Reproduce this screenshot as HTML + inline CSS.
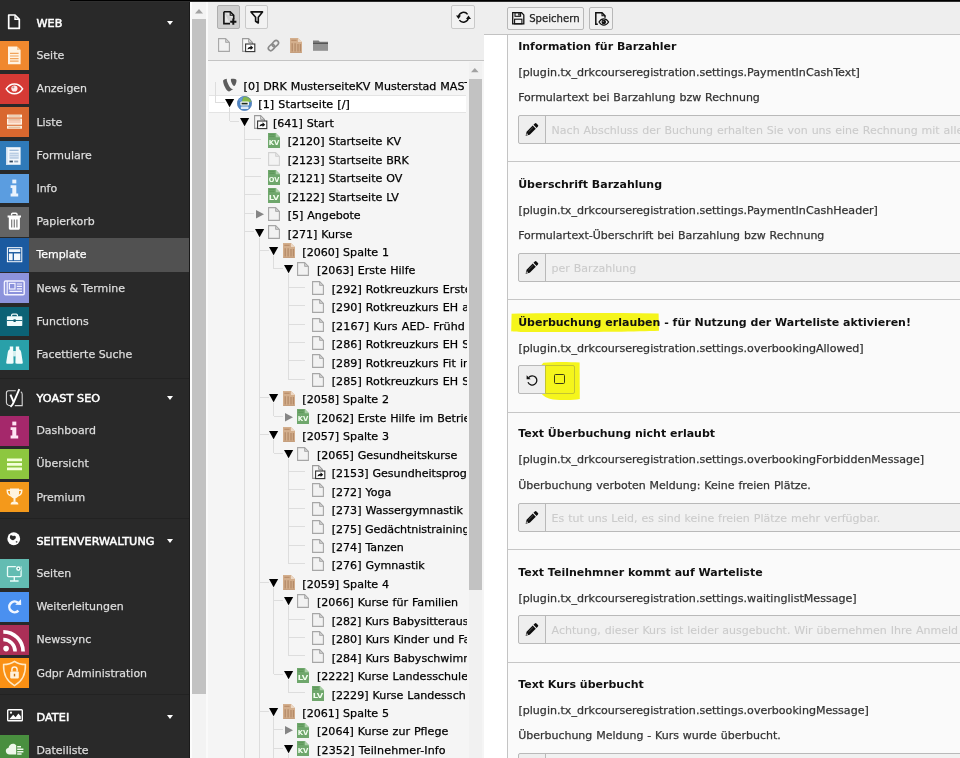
<!DOCTYPE html>
<html lang="de"><head><meta charset="utf-8"><title>TYPO3 Template</title>
<style>
*{box-sizing:border-box;margin:0;padding:0}
html,body{width:960px;height:758px;overflow:hidden;background:#fff}
body{-webkit-text-stroke:.250px;position:relative;font-family:"DejaVu Sans","Liberation Sans",sans-serif;font-size:11.1px;color:#333}
.abs{position:absolute}
svg{display:block;overflow:visible}
#sb,#tree,#content{will-change:transform}
#sb{position:absolute;left:0;top:0;width:190px;height:758px;background:#292929;overflow:hidden}
#topbar{position:absolute;left:70px;top:0;width:890px;height:2px;background:linear-gradient(#000 0,#000 1px,#2e2e2e 1px,#2e2e2e 2px)}
.mi{position:absolute;left:0;width:189.500px;height:33.250px}
.mi .ic{position:absolute;left:0;top:1.800px;width:29px;height:29.600px;overflow:hidden}
.mi .tx{position:absolute;left:36.400px;top:0;height:33.200px;line-height:33.200px;color:#dddddd;font-size:10.970px;white-space:nowrap}
.mi.act{background:#515151}
.mi.act .ic{top:0;height:33.250px}
.mi.act .tx{color:#fff}
.mh{position:absolute;left:0;width:190px;height:33px}
.mh .tx{position:absolute;left:36.400px;top:0;line-height:35.200px;color:#fff;font-weight:400;font-size:11.200px;-webkit-text-stroke:.500px;letter-spacing:.100px;white-space:nowrap}
.mh .car{position:absolute;left:166.600px;top:14.900px;width:0;height:0;border-left:3.500px solid transparent;border-right:3.500px solid transparent;border-top:4.200px solid #fff}
.sep{position:absolute;left:0;width:190px;height:1px;background:#222}
#tree{position:absolute;left:190px;top:2px;width:294px;height:756px;background:#f5f5f5;overflow:hidden}
#content{position:absolute;left:484px;top:2px;width:476px;height:756px;background:#fff;overflow:hidden}
.tr{position:absolute;height:18.440px;white-space:nowrap;font-size:11.090px;word-spacing:.420px;line-height:18.440px;color:#000}
.vl{position:absolute;width:1px;background:#dddddd}
.hl{position:absolute;height:1px;background:#dddddd}
.sec{position:absolute;left:0;width:453px;border-top:1px solid #c6c6c6}
.sec .h{-webkit-text-stroke:0;position:absolute;left:11.200px;top:14px;font-weight:700;font-size:11px;line-height:18px;color:#111;white-space:nowrap}
.sec .p{position:absolute;left:11.400px;top:40px;font-size:11.080px;line-height:18px;color:#333;white-space:nowrap}
.sec .d{position:absolute;left:11.200px;top:65.500px;word-spacing:.400px;font-size:10.990px;line-height:18px;color:#333;white-space:nowrap}
.ig{position:absolute;left:11px;height:29px;width:460px;margin-top:-.500px}
.ig .b{position:absolute;left:0;top:0;width:28px;height:29px;border:1px solid #b9b9b9;background:#eeeeee;border-radius:2px 0 0 2px}
.ig .i{position:absolute;left:27px;top:0;width:440px;height:29px;border:1px solid #b9b9b9;background:#f1f1f1;color:#cbcbcb;-webkit-text-stroke:.100px;word-spacing:.400px;font-size:11.020px;line-height:29.500px;padding-left:5.600px;white-space:nowrap;overflow:hidden}
.btn{position:absolute;border:1px solid #b8b8b8;background:#f1f1f1;border-radius:2px}
</style></head>
<body>
<div id="sb">
<div class="mh" style="top:6.0px"><span class="tx">WEB</span><span class="car"></span></div><svg class="abs" style="left:7.2px;top:14.3px" width="14" height="15.5" viewBox="0 0 14 15.500" ><path d="M1.700 1H8L12.300 5.300V14.400H1.700Z" fill="none" stroke="#fff" stroke-width="1.700" stroke-linejoin="round"/><path d="M8 1.400V5.300H12" fill="none" stroke="#fff" stroke-width="1.400"/></svg>
<div class="mi" style="top:39.08px"><div class="ic" style="background:#f0882e"><svg width="29" height="29.5" viewBox="0 0 29 29.5" style="position:absolute;left:0;top:0"><path d="M8 5.500H17L20.600 9.100V23.200H8Z" fill="#fff3e2"/><path d="M17 5.500V9.100H20.600Z" fill="#f7c892"/><path d="M10 12.400H18.600M10 15H18.600M10 17.600H18.600M10 20.200H18.600" stroke="#f1a45c" stroke-width="1.200"/></svg></div><span class="tx">Seite</span></div>
<div class="mi" style="top:72.31px"><div class="ic" style="background:#d53a35"><svg width="29" height="29.5" viewBox="0 0 29 29.5" style="position:absolute;left:0;top:0"><path d="M6.200 14.800C8.500 11.200 11.400 9.900 14.400 9.900S20.300 11.200 22.600 14.800C20.300 18.400 17.400 19.700 14.400 19.700S8.500 18.400 6.200 14.800Z" fill="none" stroke="#fff" stroke-width="1.500"/><circle cx="14.400" cy="14.500" r="3.100" fill="#fdeaea"/><circle cx="13.300" cy="13.300" r="1.100" fill="#c98a88"/></svg></div><span class="tx">Anzeigen</span></div>
<div class="mi" style="top:105.54px"><div class="ic" style="background:#d9682f"><svg width="29" height="29.5" viewBox="0 0 29 29.5" style="position:absolute;left:0;top:0"><rect x="7" y="7.600" width="15" height="2.900" fill="#fff6e6"/><rect x="7" y="11.600" width="15" height="6.100" fill="#fff3e4"/><rect x="7" y="18.800" width="15" height="2.900" fill="#fff6e6"/><path d="M8.400 9H20.400M8.400 20.200H20.400" stroke="#c98a5e" stroke-width=".700"/><rect x="8.200" y="13" width="12.600" height="3.300" fill="#f7cdb8"/><path d="M8.400 12.700H20.400" stroke="#c98a5e" stroke-width=".600"/></svg></div><span class="tx">Liste</span></div>
<div class="mi" style="top:138.77px"><div class="ic" style="background:#2f7ab9"><svg width="29" height="29.5" viewBox="0 0 29 29.5" style="position:absolute;left:0;top:0"><rect x="6" y="6.200" width="14.600" height="17.600" fill="#f2f7fc"/><rect x="6" y="6.200" width="1.600" height="17.600" fill="#cfe0f0"/><path d="M9.500 9.300H18.600" stroke="#9db9d8" stroke-width="1.300"/><rect x="9.500" y="11.600" width="9.200" height="6.200" fill="#b9cde3"/><path d="M9.500 13.600H18.700M9.500 15.700H18.700" stroke="#e3ecf6" stroke-width=".800"/><rect x="9.500" y="19.600" width="3.400" height="1.800" fill="#33475c"/><rect x="14.200" y="19.600" width="4" height="1.800" fill="#8ea3ba"/></svg></div><span class="tx">Formulare</span></div>
<div class="mi" style="top:172.00px"><div class="ic" style="background:#5b9de0"><svg width="29" height="29.5" viewBox="0 0 29 29.5" style="position:absolute;left:0;top:0"><rect x="12.300" y="5.600" width="4" height="3.800" fill="#eaf3fd"/><path d="M10.600 11.200H16.300V19.400H18.200V22.400H10.600V19.400H12.300V14H10.600Z" fill="#eaf3fd"/></svg></div><span class="tx">Info</span></div>
<div class="mi" style="top:205.23px"><div class="ic" style="background:#646464"><svg width="29" height="29.5" viewBox="0 0 29 29.5" style="position:absolute;left:0;top:0"><path d="M7.600 8.600H21V10.400H19.900V21.300C19.900 22.200 19.300 22.800 18.500 22.800H10.200C9.400 22.800 8.800 22.200 8.800 21.300V10.400H7.600Z" fill="#fff"/><path d="M11.600 8.600V7.200C11.600 6.500 12.100 6.200 12.700 6.200H15.900C16.500 6.200 17 6.500 17 7.200V8.600" fill="none" stroke="#fff" stroke-width="1.400"/><path d="M11.700 12.400V20.400M14.300 12.400V20.400M16.900 12.400V20.400" stroke="#7b7b7b" stroke-width="1.200"/></svg></div><span class="tx">Papierkorb</span></div>
<div class="mi act" style="top:238.46px"><div class="ic" style="background:#1b5aa0"><svg width="29" height="29.5" viewBox="0 0 29 33.2" style="position:absolute;left:0;top:0"><rect x="6.500" y="10.900" width="16.200" height="15.800" fill="#1b5aa0" stroke="#fff" stroke-width="1.100"/><rect x="8.200" y="12.600" width="12.800" height="3.200" fill="#f4f8fd"/><rect x="8.200" y="17.400" width="4.200" height="7.600" fill="#f4f8fd"/><rect x="13.900" y="17.400" width="7.100" height="7.600" fill="#f4f8fd"/></svg></div><span class="tx">Template</span></div>
<div class="mi" style="top:271.69px"><div class="ic" style="background:#8c93dc"><svg width="29" height="29.5" viewBox="0 0 29 29.5" style="position:absolute;left:0;top:0"><rect x="4.400" y="8" width="19.800" height="13.800" rx="1.200" fill="none" stroke="#f3f3ff" stroke-width="1.400"/><path d="M7.200 8V21.800" stroke="#f3f3ff" stroke-width="1.200"/><rect x="9.400" y="10.400" width="5.600" height="5.600" fill="none" stroke="#f3f3ff" stroke-width="1.200"/><path d="M16.800 11H22M16.800 13.400H22M16.800 15.800H22M9.400 18.400H22" stroke="#f3f3ff" stroke-width="1.200"/></svg></div><span class="tx">News &amp; Termine</span></div>
<div class="mi" style="top:304.92px"><div class="ic" style="background:#0c6275"><svg width="29" height="29.5" viewBox="0 0 29 29.5" style="position:absolute;left:0;top:0"><path d="M11.600 9.400V8.300C11.600 7.600 12.100 7.200 12.800 7.200H16.200C16.900 7.200 17.400 7.600 17.400 8.300V9.400" fill="none" stroke="#eefafa" stroke-width="1.200"/><rect x="6.900" y="9.200" width="15.400" height="9.900" rx=".800" fill="#f1fbfb"/><path d="M6.900 13.500H22.300" stroke="#1f7184" stroke-width="1"/><rect x="13.500" y="12.300" width="2.200" height="2.700" fill="#0e5a6a"/></svg></div><span class="tx">Functions</span></div>
<div class="mi" style="top:338.15px"><div class="ic" style="background:#29a0a9"><svg width="29" height="29.5" viewBox="0 0 29 29.5" style="position:absolute;left:0;top:0"><path d="M9.800 6.500H13.200V10.300L13.600 22.500C13.600 23.300 13 23.700 12.300 23.700H7.500C6.700 23.700 6.100 23.200 6.200 22.400L7.800 12.300C8.100 10.500 8.900 9.700 9.800 9.200Z" fill="#f1fbfb"/><path d="M19.200 6.500H15.800V10.300L15.400 22.500C15.400 23.300 16 23.700 16.700 23.700H21.500C22.300 23.700 22.900 23.200 22.800 22.400L21.200 12.300C20.900 10.500 20.100 9.700 19.200 9.200Z" fill="#f1fbfb"/><rect x="13" y="11" width="3" height="5.400" fill="#d5efef"/></svg></div><span class="tx">Facettierte Suche</span></div>
<div class="sep" style="top:377.500px"></div>
<div class="mh" style="top:381.0px"><span class="tx">YOAST SEO</span><span class="car"></span></div><svg class="abs" style="left:5.2px;top:388px" width="18.5" height="19.5" viewBox="0 0 18.500 19.500" ><path d="M10.800 2.800H3.600Q1.400 2.800 1.400 5V14.600Q1.400 16.600 3.400 17.200L5.600 17.600M9.800 17.600H17.200V6.400Q17.200 4.600 15.800 3.800" fill="none" stroke="#d8d8d8" stroke-width="1.100"/><path d="M5.400 6.700L8.600 13.900" fill="none" stroke="#fff" stroke-width="1.900"/><path d="M14.300 1.100L9 13.600Q7.700 17 5.500 18.900" fill="none" stroke="#fff" stroke-width="1.900"/></svg>
<div class="mi" style="top:414.28px"><div class="ic" style="background:#a5286b"><svg width="29" height="29.5" viewBox="0 0 29 29.5" style="position:absolute;left:0;top:0"><rect x="12.300" y="5.600" width="4" height="3.800" fill="#ffe4f3"/><path d="M10.600 11.200H16.300V19.400H18.200V22.400H10.600V19.400H12.300V14H10.600Z" fill="#ffe4f3"/></svg></div><span class="tx">Dashboard</span></div>
<div class="mi" style="top:447.48px"><div class="ic" style="background:#8dc73f"><svg width="29" height="29.5" viewBox="0 0 29 29.5" style="position:absolute;left:0;top:0"><path d="M7 10.800H22M7 15.300H22M7 19.800H22" stroke="#f3ffd8" stroke-width="2.800"/></svg></div><span class="tx">Übersicht</span></div>
<div class="mi" style="top:480.68px"><div class="ic" style="background:#f4991b"><svg width="29" height="29.5" viewBox="0 0 29 29.5" style="position:absolute;left:0;top:0"><path d="M10 6.400H19V11.600C19 14.600 17.200 16.400 14.500 16.400S10 14.600 10 11.600Z" fill="#fff4e0"/><path d="M10 8.200H7.200C7.200 11.200 8.600 13.200 11.200 13.800M19 8.200H21.800C21.800 11.200 20.400 13.200 17.800 13.800" fill="none" stroke="#fff4e0" stroke-width="1.400"/><rect x="13.500" y="16" width="2" height="3.800" fill="#fff4e0"/><path d="M10.600 22.500C10.600 20.700 11.900 19.600 14.500 19.600S18.400 20.700 18.400 22.500Z" fill="#fff4e0"/></svg></div><span class="tx">Premium</span></div>
<div class="sep" style="top:518px"></div>
<div class="mh" style="top:524.0px"><span class="tx">SEITENVERWALTUNG</span><span class="car"></span></div><svg class="abs" style="left:7.4px;top:532px" width="13.5" height="13.5" viewBox="0 0 13.500 13.500" ><circle cx="6.750" cy="6.750" r="6.400" fill="#fff"/><path d="M3.200 3.600C4.200 2.800 5.400 3.200 6 4.200C6.800 3.400 8.400 3.600 8.800 4.800C9.200 6.200 8 7.400 6.200 8.200C4.400 7.800 3 6.800 2.800 5.400Z" fill="#2a2a2a"/><circle cx="9.600" cy="9.800" r=".900" fill="#555"/></svg>
<div class="mi" style="top:557.08px"><div class="ic" style="background:#63bcb2"><svg width="29" height="29.5" viewBox="0 0 29 29.5" style="position:absolute;left:0;top:0"><rect x="7.500" y="7.600" width="13.600" height="10" rx=".800" fill="none" stroke="#e9fbf8" stroke-width="1.300"/><circle cx="18.400" cy="9.600" r="3.100" fill="#66bdb3"/><circle cx="18.400" cy="9.600" r="2.300" fill="#f4fffd"/><circle cx="18.400" cy="9.600" r=".800" fill="#3c8f88"/><path d="M14.300 17.600V21.600M10 22H18.600" stroke="#e9fbf8" stroke-width="1.400"/></svg></div><span class="tx">Seiten</span></div>
<div class="mi" style="top:590.28px"><div class="ic" style="background:#4a90f0"><svg width="29" height="29.5" viewBox="0 0 29 29.5" style="position:absolute;left:0;top:0"><path d="M18.400 18.600A5.300 5.300 0 1 1 18 10.800" fill="none" stroke="#f1f6ff" stroke-width="2.500"/><path d="M15.200 12.700L21.200 13 21 7.200Z" fill="#f1f6ff"/></svg></div><span class="tx">Weiterleitungen</span></div>
<div class="mi" style="top:623.48px"><div class="ic" style="background:#ab2f57"><svg width="29" height="29.5" viewBox="0 0 29 29.5" style="position:absolute;left:0;top:0"><circle cx="6.100" cy="23.600" r="2.800" fill="#fff"/><path d="M3.300 14.600A11.800 11.800 0 0 1 15.100 26.400" fill="none" stroke="#fff" stroke-width="3.500"/><path d="M3.300 6.800A19.800 19.800 0 0 1 23.100 26.400" fill="none" stroke="#fff" stroke-width="3.700"/></svg></div><span class="tx">Newssync</span></div>
<div class="mi" style="top:656.68px"><div class="ic" style="background:#fa9014"><svg width="29" height="29.5" viewBox="0 0 29 29.5" style="position:absolute;left:0;top:0"><path d="M14.500 3.400C17.600 5.600 21.400 6.600 25.400 6.600C25.800 15.600 23 22.800 14.500 27.600C6 22.800 3.200 15.600 3.600 6.600C7.600 6.600 11.400 5.600 14.500 3.400Z" fill="none" stroke="#ffe9c4" stroke-width="1.500"/><rect x="10.200" y="13.600" width="8.600" height="6.800" rx=".800" fill="#fff1dc"/><path d="M11.900 13.600V11.600A2.600 2.600 0 0 1 17.100 11.600V13.600" fill="none" stroke="#fff1dc" stroke-width="1.500"/><rect x="13.800" y="15.800" width="1.400" height="2.600" fill="#c9700a"/></svg></div><span class="tx">Gdpr Administration</span></div>
<div class="sep" style="top:694px"></div>
<div class="mh" style="top:700.1px"><span class="tx">DATEI</span><span class="car"></span></div><svg class="abs" style="left:6.7px;top:708.8px" width="16" height="12.5" viewBox="0 0 16 12.500" ><rect x=".700" y=".700" width="14.600" height="11.100" rx=".800" fill="none" stroke="#fff" stroke-width="1.400"/><path d="M2.200 10.300 6.200 5.800 8.600 8.200 11.400 4.400 13.800 7.200V10.300Z" fill="#fff"/><circle cx="4" cy="3.700" r="1.100" fill="#fff"/></svg>
<div class="mi" style="top:733.68px"><div class="ic" style="background:#498f3f"><svg width="29" height="29.5" viewBox="0 0 29 29.5" style="position:absolute;left:0;top:0"><path d="M9.600 19.400C7.400 19.400 5.800 17.900 5.800 16C5.800 14.300 7 13 8.600 12.700C8.800 10.400 10.700 8.700 13 8.700C14.500 8.700 15.600 9.300 16.200 10.200V19.400Z" fill="#eef8ea"/><path d="M17.200 11.700H21M17.200 14.200H23.400M17.200 16.700H23.400M17.200 19H21.600" stroke="#eef8ea" stroke-width="1.400"/></svg></div><span class="tx">Dateiliste</span></div>
<div class="abs" style="left:189px;top:0;width:1px;height:758px;background:#1a1a1a"></div>
</div>
<div id="tree">
<div class="abs" style="left:0;top:0;width:294px;height:58.500px;background:#eeeeee"></div><div class="abs" style="left:0;top:0;width:2.200px;height:756px;background:#fcfcfc"></div><div class="abs" style="left:2.200px;top:0;width:13.800px;height:756px;background:#f3f3f3"></div><div class="abs" style="left:2.200px;top:17.200px;width:13.700px;height:675px;background:#c2c2c2"></div><svg class="abs" style="left:5px;top:7px" width="8" height="4.4" viewBox="0 0 8 4.4" ><path d="M0 4.400 4 0 8 4.400Z" fill="#a2a2a2"/></svg><div class="abs" style="left:16px;top:0;width:2px;height:756px;background:#fafafa"></div>
<div class="btn" style="left:27px;top:3.400px;width:23.400px;height:23.200px;background:#cfcfcf;border-color:#aeaeae"></div><svg class="abs" style="left:32.6px;top:9px" width="14" height="14" viewBox="0 0 14 14" ><path d="M.9.800H7.200L10.700 4.300V8.200M7 12.600H.9V.800" fill="#e4e4e4" stroke="#111" stroke-width="1.600"/><path d="M7.200 1V4.300H10.500" fill="none" stroke="#111" stroke-width="1.100"/><path d="M10.300 7.600V13.800M7.200 10.700H13.400" stroke="#111" stroke-width="2"/></svg><div class="btn" style="left:55px;top:3.400px;width:22.600px;height:23.200px;background:#f2f2f2;border-color:#c9c9c9"></div><svg class="abs" style="left:59.6px;top:9.2px" width="13.5" height="13" viewBox="0 0 13.500 13" ><path d="M1 .900H12.500L8.300 6.300V12L5.600 10.300V6.300Z" fill="none" stroke="#111" stroke-width="1.600" stroke-linejoin="round"/></svg><div class="btn" style="left:261.200px;top:3.400px;width:23.600px;height:23.200px;background:#f2f2f2;border-color:#c9c9c9"></div><svg class="abs" style="left:265.6px;top:8.8px" width="15" height="12.5" viewBox="0 0 15 12.500" ><path d="M2.600 5.600A5 5 0 0 1 11.600 3.400" fill="none" stroke="#111" stroke-width="1.500"/><path d="M12.400 6.900A5 5 0 0 1 3.400 9.100" fill="none" stroke="#111" stroke-width="1.500"/><path d="M0 4.600H5L2.500 7.900Z" fill="#111"/><path d="M10 7.900H15L12.500 4.600Z" fill="#111"/></svg><svg class="abs" style="left:28.2px;top:36.2px" width="12" height="14" viewBox="0 0 12 14" ><path d="M.6.6H7.6L11.4 4.400V13.400H.6Z" fill="#f2f2f2" stroke="#a6a6a6" stroke-width="1.100"/><path d="M7.6.6V4.400H11.400Z" fill="#cfcfcf" stroke="#a6a6a6" stroke-width=".900"/></svg><svg class="abs" style="left:52.2px;top:36.2px" width="13.5" height="15" viewBox="0 0 13.5 15" ><path d="M.6.6H6.6L10.4 4.4V13.4H.6Z" fill="#f6f6f6" stroke="#9a9a9a" stroke-width="1.1"/><path d="M6.6.6V4.4H10.4Z" fill="#d5d5d5" stroke="#9a9a9a" stroke-width=".9"/><rect x="3.6" y="6" width="9.2" height="7.6" fill="#fff" stroke="#333" stroke-width="1.1"/><path d="M5.6 11.6c0-2 1.4-2.9 3-2.9V7.3l2.6 2.4-2.6 2.4v-1.4c-1.3 0-2.2.2-3 .9Z" fill="#111"/></svg><svg class="abs" style="left:76.6px;top:37.4px" width="13" height="13" viewBox="0 0 13 13" ><rect x="-2.600" y="-2.400" width="7" height="4.800" rx="2.400" transform="translate(3.900 9.100) rotate(-45)" fill="none" stroke="#8a8a8a" stroke-width="1.600"/><rect x="-2.600" y="-2.400" width="7" height="4.800" rx="2.400" transform="translate(7.700 5.300) rotate(-45)" fill="none" stroke="#8a8a8a" stroke-width="1.600"/></svg><svg class="abs" style="left:100.4px;top:36.4px" width="12" height="15" viewBox="0 0 12 15" ><path d="M0 0H8L12 4V15H0Z" fill="#d3ae8c"/><path d="M8 0V4H12Z" fill="#ecd7c3"/><path d="M1.3 2.3H6.6" stroke="#b98d69" stroke-width="1.2"/><path d="M2.2 5.2V13.6M5.1 5.2V13.6M8 6V13.6M10.4 6V13.6" stroke="#b48a68" stroke-width="1.3"/><path d="M.5 14.4H11.5" stroke="#c39d7d" stroke-width="1"/></svg><svg class="abs" style="left:123px;top:38.2px" width="15" height="10.5" viewBox="0 0 15 10.500" ><path d="M0 .600H5.600L6.800 1.800H15V10.500H0Z" fill="#7d7d7d"/><path d="M0 3.400H15" stroke="#555" stroke-width="1.200"/><rect x="0" y="4" width="15" height="6.500" fill="#929292"/></svg><div class="abs" style="left:18px;top:58.200px;width:276px;height:1px;background:#c4c4c4"></div>
<div class="abs" style="left:278.800px;top:60px;width:13.200px;height:700px;background:#f1f1f1"></div><div class="abs" style="left:279px;top:76.800px;width:12.700px;height:511px;background:#c2c2c2"></div><svg class="abs" style="left:281.4px;top:66.4px" width="7.6" height="4.2" viewBox="0 0 8 4.4" ><path d="M0 4.400 4 0 8 4.400Z" fill="#a2a2a2"/></svg>
<div class="abs" style="left:18.500px;top:92.600px;width:257.600px;height:18.400px;background:#fff;border-top:1px solid #e4e4e4;border-bottom:1px solid #e4e4e4"></div>
<div class="abs" style="left:0;top:0;width:277px;height:756px;overflow:hidden">
<div class="vl" style="left:24.90px;top:80.00px;height:20.74px"></div><div class="hl" style="left:25.40px;top:100.24px;width:9.30px"></div><div class="vl" style="left:39.20px;top:106.44px;height:12.74px"></div><div class="hl" style="left:39.70px;top:118.68px;width:9.68px"></div><div class="vl" style="left:53.88px;top:124.88px;height:635.12px"></div><div class="hl" style="left:54.38px;top:137.12px;width:16.66px"></div><div class="hl" style="left:54.38px;top:155.56px;width:16.66px"></div><div class="hl" style="left:54.38px;top:174.00px;width:16.66px"></div><div class="hl" style="left:54.38px;top:192.44px;width:16.66px"></div><div class="hl" style="left:54.38px;top:210.88px;width:9.68px"></div><div class="hl" style="left:54.38px;top:229.32px;width:9.68px"></div><div class="vl" style="left:68.56px;top:235.52px;height:524.48px"></div><div class="hl" style="left:69.06px;top:247.76px;width:9.68px"></div><div class="hl" style="left:69.06px;top:395.28px;width:9.68px"></div><div class="hl" style="left:69.06px;top:432.16px;width:9.68px"></div><div class="hl" style="left:69.06px;top:579.68px;width:9.68px"></div><div class="hl" style="left:69.06px;top:708.76px;width:9.68px"></div><div class="vl" style="left:83.24px;top:253.96px;height:12.74px"></div><div class="hl" style="left:83.74px;top:266.20px;width:9.68px"></div><div class="vl" style="left:97.92px;top:272.40px;height:104.94px"></div><div class="hl" style="left:98.42px;top:284.64px;width:16.66px"></div><div class="hl" style="left:98.42px;top:303.08px;width:16.66px"></div><div class="hl" style="left:98.42px;top:321.52px;width:16.66px"></div><div class="hl" style="left:98.42px;top:339.96px;width:16.66px"></div><div class="hl" style="left:98.42px;top:358.40px;width:16.66px"></div><div class="hl" style="left:98.42px;top:376.84px;width:16.66px"></div><div class="vl" style="left:83.24px;top:401.48px;height:12.74px"></div><div class="hl" style="left:83.74px;top:413.72px;width:9.68px"></div><div class="vl" style="left:83.24px;top:438.36px;height:12.74px"></div><div class="hl" style="left:83.74px;top:450.60px;width:9.68px"></div><div class="vl" style="left:97.92px;top:456.80px;height:104.94px"></div><div class="hl" style="left:98.42px;top:469.04px;width:16.66px"></div><div class="hl" style="left:98.42px;top:487.48px;width:16.66px"></div><div class="hl" style="left:98.42px;top:505.92px;width:16.66px"></div><div class="hl" style="left:98.42px;top:524.36px;width:16.66px"></div><div class="hl" style="left:98.42px;top:542.80px;width:16.66px"></div><div class="hl" style="left:98.42px;top:561.24px;width:16.66px"></div><div class="vl" style="left:83.24px;top:585.88px;height:86.50px"></div><div class="hl" style="left:83.74px;top:598.12px;width:9.68px"></div><div class="hl" style="left:83.74px;top:671.88px;width:9.68px"></div><div class="vl" style="left:97.92px;top:604.32px;height:49.62px"></div><div class="hl" style="left:98.42px;top:616.56px;width:16.66px"></div><div class="hl" style="left:98.42px;top:635.00px;width:16.66px"></div><div class="hl" style="left:98.42px;top:653.44px;width:16.66px"></div><div class="vl" style="left:97.92px;top:678.08px;height:12.74px"></div><div class="hl" style="left:98.42px;top:690.32px;width:16.66px"></div><div class="vl" style="left:83.24px;top:714.96px;height:45.04px"></div><div class="hl" style="left:83.74px;top:727.20px;width:9.68px"></div><div class="hl" style="left:83.74px;top:745.64px;width:9.68px"></div><div class="vl" style="left:97.92px;top:751.84px;height:8.16px"></div>
<div class="tr" style="top:76.00px;left:53.60px">[0] DRK MusterseiteKV Musterstad MAST</div><svg class="abs" style="left:32.19999999999999px;top:75.6px" width="15.5" height="14.5" viewBox="0 0 15.6 13" ><path d="M11.3 10.2c-.3.1-.5.1-.8.1C8.200 10.300 4.800 2.800 4.800.900c0-.5.1-.7.300-.9C3.600.200 1.900.700 1.300 1.400 1.200 1.600 1.100 1.900 1.100 2.300c0 3.200 3.400 10.400 5.800 10.400 1.100 0 3-1.800 4.400-2.500Z" fill="#5c5c5c"/><path d="M10.200 0c2.200 0 4.400.4 4.400 1.600 0 2.500-1.600 5.600-2.400 5.600C10.700 7.200 8.900 3.100 8.900 1c0-.9.400-1 1.300-1Z" fill="#5c5c5c"/></svg>
<div class="tr" style="letter-spacing:0.105px;top:94.44px;left:68.28px">[1] Startseite [/]</div><svg class="abs" style="left:47px;top:93.84px" width="15" height="15" viewBox="0 0 15 15" ><circle cx="7.5" cy="7.5" r="7.3" fill="#4f86c6"/><path d="M7.5.2A7.3 7.3 0 0 1 14.6 6H5.2C5 3.6 5.8 1.4 7.5.2Z" fill="#86b94a"/><path d="M1.2 4.2C2.6 2 4.6.6 7 .3 5.6 1.6 4.6 3.6 4.4 5.6Z" fill="#6aa0dc"/><rect x="3.4" y="5.4" width="8.6" height="4.2" rx=".8" fill="#f4f7f4"/><rect x="4.6" y="6.8" width="6" height="1.6" fill="#1c2a20"/><rect x="3.9" y="10.6" width="7.6" height="2.4" rx=".6" fill="#dfe9f6"/><circle cx="7.5" cy="7.5" r="7" fill="none" stroke="#5b83b5" stroke-width=".7"/></svg><svg class="abs" style="left:35.19999999999999px;top:97.44px" width="9.2" height="8.2" viewBox="0 0 9.2 8.2" ><path d="M0 0H9.2L4.600 8.200Z" fill="#000"/></svg>
<div class="tr" style="top:112.88px;left:82.96px">[641] Start</div><svg class="abs" style="left:63.71999999999999px;top:112.88px" width="13.5" height="15" viewBox="0 0 13.5 15" ><path d="M.6.6H6.6L10.4 4.4V13.4H.6Z" fill="#f6f6f6" stroke="#9a9a9a" stroke-width="1.1"/><path d="M6.6.6V4.4H10.4Z" fill="#d5d5d5" stroke="#9a9a9a" stroke-width=".9"/><rect x="3.6" y="6" width="9.2" height="7.6" fill="#fff" stroke="#333" stroke-width="1.1"/><path d="M5.6 11.6c0-2 1.4-2.9 3-2.9V7.3l2.6 2.4-2.6 2.4v-1.4c-1.3 0-2.2.2-3 .9Z" fill="#111"/></svg><svg class="abs" style="left:49.879999999999995px;top:115.88px" width="9.2" height="8.2" viewBox="0 0 9.2 8.2" ><path d="M0 0H9.2L4.600 8.200Z" fill="#000"/></svg>
<div class="tr" style="top:131.32px;left:97.64px">[2120] Startseite KV</div><svg class="abs" style="left:78.0px;top:130.82px" width="12" height="15" viewBox="0 0 12 15" ><path d="M0 0H7.8L12 4.2V15H0Z" fill="#6fa76c"/><path d="M7.8 0V4.2H12Z" fill="#a9cfa6"/><path d="M1.2 1.6H6.6M1.2 3.4H6.6" stroke="#5b9658" stroke-width=".9"/><text x="6" y="12" font-family="'DejaVu Sans','Liberation Sans',sans-serif" font-weight="700" font-size="6.9" fill="#f4fff0" text-anchor="middle" textLength="10.6" lengthAdjust="spacingAndGlyphs">KV</text></svg>
<div class="tr" style="top:149.76px;left:97.64px">[2123] Startseite BRK</div><svg opacity=".45" class="abs" style="left:78.0px;top:149.56px" width="12" height="14" viewBox="0 0 12 14" ><path d="M.6.6H7.6L11.4 4.400V13.400H.6Z" fill="#f2f2f2" stroke="#a6a6a6" stroke-width="1.100"/><path d="M7.6.6V4.400H11.400Z" fill="#cfcfcf" stroke="#a6a6a6" stroke-width=".900"/></svg>
<div class="tr" style="top:168.20px;left:97.64px">[2121] Startseite OV</div><svg class="abs" style="left:78.0px;top:167.7px" width="12" height="15" viewBox="0 0 12 15" ><path d="M0 0H7.8L12 4.2V15H0Z" fill="#6fa76c"/><path d="M7.8 0V4.2H12Z" fill="#a9cfa6"/><path d="M1.2 1.6H6.6M1.2 3.4H6.6" stroke="#5b9658" stroke-width=".9"/><text x="6" y="12" font-family="'DejaVu Sans','Liberation Sans',sans-serif" font-weight="700" font-size="6.9" fill="#f4fff0" text-anchor="middle" textLength="10.6" lengthAdjust="spacingAndGlyphs">OV</text></svg>
<div class="tr" style="top:186.64px;left:97.64px">[2122] Startseite LV</div><svg class="abs" style="left:78.0px;top:186.14000000000001px" width="12" height="15" viewBox="0 0 12 15" ><path d="M0 0H7.8L12 4.2V15H0Z" fill="#6fa76c"/><path d="M7.8 0V4.2H12Z" fill="#a9cfa6"/><path d="M1.2 1.6H6.6M1.2 3.4H6.6" stroke="#5b9658" stroke-width=".9"/><text x="6" y="12" font-family="'DejaVu Sans','Liberation Sans',sans-serif" font-weight="700" font-size="6.9" fill="#f4fff0" text-anchor="middle" textLength="10.6" lengthAdjust="spacingAndGlyphs">LV</text></svg>
<div class="tr" style="top:205.08px;left:97.64px">[5] Angebote</div><svg class="abs" style="left:78.0px;top:204.88000000000002px" width="12" height="14" viewBox="0 0 12 14" ><path d="M.6.6H7.6L11.4 4.400V13.400H.6Z" fill="#f2f2f2" stroke="#a6a6a6" stroke-width="1.100"/><path d="M7.6.6V4.400H11.400Z" fill="#cfcfcf" stroke="#a6a6a6" stroke-width=".900"/></svg><svg class="abs" style="left:65.66px;top:207.88000000000002px" width="8" height="8.6" viewBox="0 0 8 8.6" ><path d="M0 0L8 4.300 0 8.600Z" fill="#858585"/></svg>
<div class="tr" style="top:223.52px;left:97.64px">[271] Kurse</div><svg class="abs" style="left:78.0px;top:223.32000000000002px" width="12" height="14" viewBox="0 0 12 14" ><path d="M.6.6H7.6L11.4 4.400V13.400H.6Z" fill="#f2f2f2" stroke="#a6a6a6" stroke-width="1.100"/><path d="M7.6.6V4.400H11.400Z" fill="#cfcfcf" stroke="#a6a6a6" stroke-width=".900"/></svg><svg class="abs" style="left:64.56px;top:226.52px" width="9.2" height="8.2" viewBox="0 0 9.2 8.2" ><path d="M0 0H9.2L4.600 8.200Z" fill="#000"/></svg>
<div class="tr" style="top:241.96px;left:112.32px">[2060] Spalte 1</div><svg class="abs" style="left:92.68px;top:241.06px" width="12" height="15" viewBox="0 0 12 15" ><path d="M0 0H8L12 4V15H0Z" fill="#d3ae8c"/><path d="M8 0V4H12Z" fill="#ecd7c3"/><path d="M1.3 2.3H6.6" stroke="#b98d69" stroke-width="1.2"/><path d="M2.2 5.2V13.6M5.1 5.2V13.6M8 6V13.6M10.4 6V13.6" stroke="#b48a68" stroke-width="1.3"/><path d="M.5 14.4H11.5" stroke="#c39d7d" stroke-width="1"/></svg><svg class="abs" style="left:79.24000000000001px;top:244.96px" width="9.2" height="8.2" viewBox="0 0 9.2 8.2" ><path d="M0 0H9.2L4.600 8.200Z" fill="#000"/></svg>
<div class="tr" style="top:260.40px;left:127.00px">[2063] Erste Hilfe</div><svg class="abs" style="left:107.36000000000001px;top:260.2px" width="12" height="14" viewBox="0 0 12 14" ><path d="M.6.6H7.6L11.4 4.400V13.400H.6Z" fill="#f2f2f2" stroke="#a6a6a6" stroke-width="1.100"/><path d="M7.6.6V4.400H11.400Z" fill="#cfcfcf" stroke="#a6a6a6" stroke-width=".900"/></svg><svg class="abs" style="left:93.91999999999996px;top:263.4px" width="9.2" height="8.2" viewBox="0 0 9.2 8.2" ><path d="M0 0H9.2L4.600 8.200Z" fill="#000"/></svg>
<div class="tr" style="letter-spacing:0.065px;top:278.84px;left:141.68px">[292] Rotkreuzkurs Erste</div><svg class="abs" style="left:122.04000000000002px;top:278.64000000000004px" width="12" height="14" viewBox="0 0 12 14" ><path d="M.6.6H7.6L11.4 4.400V13.400H.6Z" fill="#f2f2f2" stroke="#a6a6a6" stroke-width="1.100"/><path d="M7.6.6V4.400H11.400Z" fill="#cfcfcf" stroke="#a6a6a6" stroke-width=".900"/></svg>
<div class="tr" style="letter-spacing:0.065px;top:297.28px;left:141.68px">[290] Rotkreuzkurs EH a</div><svg class="abs" style="left:122.04000000000002px;top:297.08000000000004px" width="12" height="14" viewBox="0 0 12 14" ><path d="M.6.6H7.6L11.4 4.400V13.400H.6Z" fill="#f2f2f2" stroke="#a6a6a6" stroke-width="1.100"/><path d="M7.6.6V4.400H11.400Z" fill="#cfcfcf" stroke="#a6a6a6" stroke-width=".900"/></svg>
<div class="tr" style="letter-spacing:0.105px;top:315.72px;left:141.68px">[2167] Kurs AED- Frühd</div><svg class="abs" style="left:122.04000000000002px;top:315.52000000000004px" width="12" height="14" viewBox="0 0 12 14" ><path d="M.6.6H7.6L11.4 4.400V13.400H.6Z" fill="#f2f2f2" stroke="#a6a6a6" stroke-width="1.100"/><path d="M7.6.6V4.400H11.400Z" fill="#cfcfcf" stroke="#a6a6a6" stroke-width=".900"/></svg>
<div class="tr" style="letter-spacing:0.065px;top:334.16px;left:141.68px">[286] Rotkreuzkurs EH S</div><svg class="abs" style="left:122.04000000000002px;top:333.96000000000004px" width="12" height="14" viewBox="0 0 12 14" ><path d="M.6.6H7.6L11.4 4.400V13.400H.6Z" fill="#f2f2f2" stroke="#a6a6a6" stroke-width="1.100"/><path d="M7.6.6V4.400H11.400Z" fill="#cfcfcf" stroke="#a6a6a6" stroke-width=".900"/></svg>
<div class="tr" style="letter-spacing:0.065px;top:352.60px;left:141.68px">[289] Rotkreuzkurs Fit in</div><svg class="abs" style="left:122.04000000000002px;top:352.40000000000003px" width="12" height="14" viewBox="0 0 12 14" ><path d="M.6.6H7.6L11.4 4.400V13.400H.6Z" fill="#f2f2f2" stroke="#a6a6a6" stroke-width="1.100"/><path d="M7.6.6V4.400H11.400Z" fill="#cfcfcf" stroke="#a6a6a6" stroke-width=".900"/></svg>
<div class="tr" style="letter-spacing:0.065px;top:371.04px;left:141.68px">[285] Rotkreuzkurs EH S</div><svg class="abs" style="left:122.04000000000002px;top:370.84000000000003px" width="12" height="14" viewBox="0 0 12 14" ><path d="M.6.6H7.6L11.4 4.400V13.400H.6Z" fill="#f2f2f2" stroke="#a6a6a6" stroke-width="1.100"/><path d="M7.6.6V4.400H11.400Z" fill="#cfcfcf" stroke="#a6a6a6" stroke-width=".900"/></svg>
<div class="tr" style="top:389.48px;left:112.32px">[2058] Spalte 2</div><svg class="abs" style="left:92.68px;top:388.58000000000004px" width="12" height="15" viewBox="0 0 12 15" ><path d="M0 0H8L12 4V15H0Z" fill="#d3ae8c"/><path d="M8 0V4H12Z" fill="#ecd7c3"/><path d="M1.3 2.3H6.6" stroke="#b98d69" stroke-width="1.2"/><path d="M2.2 5.2V13.6M5.1 5.2V13.6M8 6V13.6M10.4 6V13.6" stroke="#b48a68" stroke-width="1.3"/><path d="M.5 14.4H11.5" stroke="#c39d7d" stroke-width="1"/></svg><svg class="abs" style="left:79.24000000000001px;top:392.48px" width="9.2" height="8.2" viewBox="0 0 9.2 8.2" ><path d="M0 0H9.2L4.600 8.200Z" fill="#000"/></svg>
<div class="tr" style="top:407.92px;left:127.00px">[2062] Erste Hilfe im Betrie</div><svg class="abs" style="left:107.36000000000001px;top:407.42px" width="12" height="15" viewBox="0 0 12 15" ><path d="M0 0H7.8L12 4.2V15H0Z" fill="#6fa76c"/><path d="M7.8 0V4.2H12Z" fill="#a9cfa6"/><path d="M1.2 1.6H6.6M1.2 3.4H6.6" stroke="#5b9658" stroke-width=".9"/><text x="6" y="12" font-family="'DejaVu Sans','Liberation Sans',sans-serif" font-weight="700" font-size="6.9" fill="#f4fff0" text-anchor="middle" textLength="10.6" lengthAdjust="spacingAndGlyphs">KV</text></svg><svg class="abs" style="left:95.01999999999995px;top:410.72px" width="8" height="8.6" viewBox="0 0 8 8.6" ><path d="M0 0L8 4.300 0 8.600Z" fill="#858585"/></svg>
<div class="tr" style="top:426.36px;left:112.32px">[2057] Spalte 3</div><svg class="abs" style="left:92.68px;top:425.46000000000004px" width="12" height="15" viewBox="0 0 12 15" ><path d="M0 0H8L12 4V15H0Z" fill="#d3ae8c"/><path d="M8 0V4H12Z" fill="#ecd7c3"/><path d="M1.3 2.3H6.6" stroke="#b98d69" stroke-width="1.2"/><path d="M2.2 5.2V13.6M5.1 5.2V13.6M8 6V13.6M10.4 6V13.6" stroke="#b48a68" stroke-width="1.3"/><path d="M.5 14.4H11.5" stroke="#c39d7d" stroke-width="1"/></svg><svg class="abs" style="left:79.24000000000001px;top:429.36px" width="9.2" height="8.2" viewBox="0 0 9.2 8.2" ><path d="M0 0H9.2L4.600 8.200Z" fill="#000"/></svg>
<div class="tr" style="top:444.80px;left:127.00px">[2065] Gesundheitskurse</div><svg class="abs" style="left:107.36000000000001px;top:444.6px" width="12" height="14" viewBox="0 0 12 14" ><path d="M.6.6H7.6L11.4 4.400V13.400H.6Z" fill="#f2f2f2" stroke="#a6a6a6" stroke-width="1.100"/><path d="M7.6.6V4.400H11.400Z" fill="#cfcfcf" stroke="#a6a6a6" stroke-width=".900"/></svg><svg class="abs" style="left:93.91999999999996px;top:447.8px" width="9.2" height="8.2" viewBox="0 0 9.2 8.2" ><path d="M0 0H9.2L4.600 8.200Z" fill="#000"/></svg>
<div class="tr" style="top:463.24px;left:141.68px">[2153] Gesundheitsprog</div><svg class="abs" style="left:122.44000000000003px;top:463.24px" width="13.5" height="15" viewBox="0 0 13.5 15" ><path d="M.6.6H6.6L10.4 4.4V13.4H.6Z" fill="#f6f6f6" stroke="#9a9a9a" stroke-width="1.1"/><path d="M6.6.6V4.4H10.4Z" fill="#d5d5d5" stroke="#9a9a9a" stroke-width=".9"/><rect x="3.6" y="6" width="9.2" height="7.6" fill="#fff" stroke="#333" stroke-width="1.1"/><path d="M5.6 11.6c0-2 1.4-2.9 3-2.9V7.3l2.6 2.4-2.6 2.4v-1.4c-1.3 0-2.2.2-3 .9Z" fill="#111"/></svg>
<div class="tr" style="top:481.68px;left:141.68px">[272] Yoga</div><svg class="abs" style="left:122.04000000000002px;top:481.48px" width="12" height="14" viewBox="0 0 12 14" ><path d="M.6.6H7.6L11.4 4.400V13.400H.6Z" fill="#f2f2f2" stroke="#a6a6a6" stroke-width="1.100"/><path d="M7.6.6V4.400H11.400Z" fill="#cfcfcf" stroke="#a6a6a6" stroke-width=".900"/></svg>
<div class="tr" style="top:500.12px;left:141.68px">[273] Wassergymnastik</div><svg class="abs" style="left:122.04000000000002px;top:499.92px" width="12" height="14" viewBox="0 0 12 14" ><path d="M.6.6H7.6L11.4 4.400V13.400H.6Z" fill="#f2f2f2" stroke="#a6a6a6" stroke-width="1.100"/><path d="M7.6.6V4.400H11.400Z" fill="#cfcfcf" stroke="#a6a6a6" stroke-width=".900"/></svg>
<div class="tr" style="letter-spacing:-0.060px;top:518.56px;left:141.68px">[275] Gedächtnistraining</div><svg class="abs" style="left:122.04000000000002px;top:518.36px" width="12" height="14" viewBox="0 0 12 14" ><path d="M.6.6H7.6L11.4 4.400V13.400H.6Z" fill="#f2f2f2" stroke="#a6a6a6" stroke-width="1.100"/><path d="M7.6.6V4.400H11.400Z" fill="#cfcfcf" stroke="#a6a6a6" stroke-width=".900"/></svg>
<div class="tr" style="top:537.00px;left:141.68px">[274] Tanzen</div><svg class="abs" style="left:122.04000000000002px;top:536.8px" width="12" height="14" viewBox="0 0 12 14" ><path d="M.6.6H7.6L11.4 4.400V13.400H.6Z" fill="#f2f2f2" stroke="#a6a6a6" stroke-width="1.100"/><path d="M7.6.6V4.400H11.400Z" fill="#cfcfcf" stroke="#a6a6a6" stroke-width=".900"/></svg>
<div class="tr" style="top:555.44px;left:141.68px">[276] Gymnastik</div><svg class="abs" style="left:122.04000000000002px;top:555.24px" width="12" height="14" viewBox="0 0 12 14" ><path d="M.6.6H7.6L11.4 4.400V13.400H.6Z" fill="#f2f2f2" stroke="#a6a6a6" stroke-width="1.100"/><path d="M7.6.6V4.400H11.400Z" fill="#cfcfcf" stroke="#a6a6a6" stroke-width=".900"/></svg>
<div class="tr" style="top:573.88px;left:112.32px">[2059] Spalte 4</div><svg class="abs" style="left:92.68px;top:572.9800000000001px" width="12" height="15" viewBox="0 0 12 15" ><path d="M0 0H8L12 4V15H0Z" fill="#d3ae8c"/><path d="M8 0V4H12Z" fill="#ecd7c3"/><path d="M1.3 2.3H6.6" stroke="#b98d69" stroke-width="1.2"/><path d="M2.2 5.2V13.6M5.1 5.2V13.6M8 6V13.6M10.4 6V13.6" stroke="#b48a68" stroke-width="1.3"/><path d="M.5 14.4H11.5" stroke="#c39d7d" stroke-width="1"/></svg><svg class="abs" style="left:79.24000000000001px;top:576.8800000000001px" width="9.2" height="8.2" viewBox="0 0 9.2 8.2" ><path d="M0 0H9.2L4.600 8.200Z" fill="#000"/></svg>
<div class="tr" style="top:592.32px;left:127.00px">[2066] Kurse für Familien</div><svg class="abs" style="left:107.36000000000001px;top:592.12px" width="12" height="14" viewBox="0 0 12 14" ><path d="M.6.6H7.6L11.4 4.400V13.400H.6Z" fill="#f2f2f2" stroke="#a6a6a6" stroke-width="1.100"/><path d="M7.6.6V4.400H11.400Z" fill="#cfcfcf" stroke="#a6a6a6" stroke-width=".900"/></svg><svg class="abs" style="left:93.91999999999996px;top:595.32px" width="9.2" height="8.2" viewBox="0 0 9.2 8.2" ><path d="M0 0H9.2L4.600 8.200Z" fill="#000"/></svg>
<div class="tr" style="letter-spacing:-0.060px;top:610.76px;left:141.68px">[282] Kurs Babysitteraus</div><svg class="abs" style="left:122.04000000000002px;top:610.56px" width="12" height="14" viewBox="0 0 12 14" ><path d="M.6.6H7.6L11.4 4.400V13.400H.6Z" fill="#f2f2f2" stroke="#a6a6a6" stroke-width="1.100"/><path d="M7.6.6V4.400H11.400Z" fill="#cfcfcf" stroke="#a6a6a6" stroke-width=".900"/></svg>
<div class="tr" style="top:629.20px;left:141.68px">[280] Kurs Kinder und Fa</div><svg class="abs" style="left:122.04000000000002px;top:629.0px" width="12" height="14" viewBox="0 0 12 14" ><path d="M.6.6H7.6L11.4 4.400V13.400H.6Z" fill="#f2f2f2" stroke="#a6a6a6" stroke-width="1.100"/><path d="M7.6.6V4.400H11.400Z" fill="#cfcfcf" stroke="#a6a6a6" stroke-width=".900"/></svg>
<div class="tr" style="top:647.64px;left:141.68px">[284] Kurs Babyschwimm</div><svg class="abs" style="left:122.04000000000002px;top:647.4399999999999px" width="12" height="14" viewBox="0 0 12 14" ><path d="M.6.6H7.6L11.4 4.400V13.400H.6Z" fill="#f2f2f2" stroke="#a6a6a6" stroke-width="1.100"/><path d="M7.6.6V4.400H11.400Z" fill="#cfcfcf" stroke="#a6a6a6" stroke-width=".900"/></svg>
<div class="tr" style="top:666.08px;left:127.00px">[2222] Kurse Landesschule</div><svg class="abs" style="left:107.36000000000001px;top:665.58px" width="12" height="15" viewBox="0 0 12 15" ><path d="M0 0H7.8L12 4.2V15H0Z" fill="#6fa76c"/><path d="M7.8 0V4.2H12Z" fill="#a9cfa6"/><path d="M1.2 1.6H6.6M1.2 3.4H6.6" stroke="#5b9658" stroke-width=".9"/><text x="6" y="12" font-family="'DejaVu Sans','Liberation Sans',sans-serif" font-weight="700" font-size="6.9" fill="#f4fff0" text-anchor="middle" textLength="10.6" lengthAdjust="spacingAndGlyphs">LV</text></svg><svg class="abs" style="left:93.91999999999996px;top:669.08px" width="9.2" height="8.2" viewBox="0 0 9.2 8.2" ><path d="M0 0H9.2L4.600 8.200Z" fill="#000"/></svg>
<div class="tr" style="top:684.52px;left:141.68px">[2229] Kurse Landessch</div><svg class="abs" style="left:122.04000000000002px;top:684.0200000000001px" width="12" height="15" viewBox="0 0 12 15" ><path d="M0 0H7.8L12 4.2V15H0Z" fill="#6fa76c"/><path d="M7.8 0V4.2H12Z" fill="#a9cfa6"/><path d="M1.2 1.6H6.6M1.2 3.4H6.6" stroke="#5b9658" stroke-width=".9"/><text x="6" y="12" font-family="'DejaVu Sans','Liberation Sans',sans-serif" font-weight="700" font-size="6.9" fill="#f4fff0" text-anchor="middle" textLength="10.6" lengthAdjust="spacingAndGlyphs">LV</text></svg>
<div class="tr" style="top:702.96px;left:112.32px">[2061] Spalte 5</div><svg class="abs" style="left:92.68px;top:702.0600000000001px" width="12" height="15" viewBox="0 0 12 15" ><path d="M0 0H8L12 4V15H0Z" fill="#d3ae8c"/><path d="M8 0V4H12Z" fill="#ecd7c3"/><path d="M1.3 2.3H6.6" stroke="#b98d69" stroke-width="1.2"/><path d="M2.2 5.2V13.6M5.1 5.2V13.6M8 6V13.6M10.4 6V13.6" stroke="#b48a68" stroke-width="1.3"/><path d="M.5 14.4H11.5" stroke="#c39d7d" stroke-width="1"/></svg><svg class="abs" style="left:79.24000000000001px;top:705.96px" width="9.2" height="8.2" viewBox="0 0 9.2 8.2" ><path d="M0 0H9.2L4.600 8.200Z" fill="#000"/></svg>
<div class="tr" style="top:721.40px;left:127.00px">[2064] Kurse zur Pflege</div><svg class="abs" style="left:107.36000000000001px;top:720.9000000000001px" width="12" height="15" viewBox="0 0 12 15" ><path d="M0 0H7.8L12 4.2V15H0Z" fill="#6fa76c"/><path d="M7.8 0V4.2H12Z" fill="#a9cfa6"/><path d="M1.2 1.6H6.6M1.2 3.4H6.6" stroke="#5b9658" stroke-width=".9"/><text x="6" y="12" font-family="'DejaVu Sans','Liberation Sans',sans-serif" font-weight="700" font-size="6.9" fill="#f4fff0" text-anchor="middle" textLength="10.6" lengthAdjust="spacingAndGlyphs">KV</text></svg><svg class="abs" style="left:95.01999999999995px;top:724.2px" width="8" height="8.6" viewBox="0 0 8 8.6" ><path d="M0 0L8 4.300 0 8.600Z" fill="#858585"/></svg>
<div class="tr" style="letter-spacing:0.130px;top:739.84px;left:127.00px">[2352] Teilnehmer-Info</div><svg class="abs" style="left:107.36000000000001px;top:739.34px" width="12" height="15" viewBox="0 0 12 15" ><path d="M0 0H7.8L12 4.2V15H0Z" fill="#6fa76c"/><path d="M7.8 0V4.2H12Z" fill="#a9cfa6"/><path d="M1.2 1.6H6.6M1.2 3.4H6.6" stroke="#5b9658" stroke-width=".9"/><text x="6" y="12" font-family="'DejaVu Sans','Liberation Sans',sans-serif" font-weight="700" font-size="6.9" fill="#f4fff0" text-anchor="middle" textLength="10.6" lengthAdjust="spacingAndGlyphs">KV</text></svg><svg class="abs" style="left:93.91999999999996px;top:742.84px" width="9.2" height="8.2" viewBox="0 0 9.2 8.2" ><path d="M0 0H9.2L4.600 8.200Z" fill="#000"/></svg>
</div>
</div>
<div id="content">
<div class="abs" style="left:23px;top:32px;width:453px;height:730px;background:#fafafa;border-left:1.500px solid #c4c4c4"></div>
<div class="abs" style="left:24px;top:0;width:452px;height:756px;overflow:hidden">
<div class="sec" style="left:-1px;top:20.7px;height:140px"><div class="abs" style="left:0;top:0px;width:453px;height:130px"><div class="h">Information für Barzahler</div><div class="p">[plugin.tx_drkcourseregistration.settings.PaymentInCashText]</div><div class="d">Formulartext bei Barzahlung bzw Rechnung</div><div class="ig" style="top:92px"><div class="b"></div><svg class="abs" style="left:7.3px;top:7.6px" width="13.4" height="13.4" viewBox="0 0 13.400 13.400" ><g transform="translate(6.700 6.700) rotate(-45)"><path d="M-8.600 0L-5 -2.200H3.600V2.200H-5Z" fill="#0d0d0d"/><path d="M4.700 -2.200H6.600Q7.800 -2.200 7.800 -1V1Q7.800 2.200 6.600 2.200H4.700Z" fill="#0d0d0d"/><circle cx="-6.500" cy="0" r=".700" fill="#f4f4f4"/><path d="M-3.800 -.700H2.600" stroke="#8a8a8a" stroke-width=".500"/></g></svg><div class="i">Nach Abschluss der Buchung erhalten Sie von uns eine Rechnung mit alle</div></div></div></div>
<div class="sec" style="left:-1px;top:158.7px;height:140px"><div class="abs" style="left:0;top:0px;width:453px;height:130px"><div class="h">Überschrift Barzahlung</div><div class="p">[plugin.tx_drkcourseregistration.settings.PaymentInCashHeader]</div><div class="d">Formulartext-Überschrift bei Barzahlung bzw Rechnung</div><div class="ig" style="top:92px"><div class="b"></div><svg class="abs" style="left:7.3px;top:7.6px" width="13.4" height="13.4" viewBox="0 0 13.400 13.400" ><g transform="translate(6.700 6.700) rotate(-45)"><path d="M-8.600 0L-5 -2.200H3.600V2.200H-5Z" fill="#0d0d0d"/><path d="M4.700 -2.200H6.600Q7.800 -2.200 7.800 -1V1Q7.800 2.200 6.600 2.200H4.700Z" fill="#0d0d0d"/><circle cx="-6.500" cy="0" r=".700" fill="#f4f4f4"/><path d="M-3.800 -.700H2.600" stroke="#8a8a8a" stroke-width=".500"/></g></svg><div class="i">per Barzahlung</div></div></div></div>
<div class="sec" style="left:-1px;top:296.7px;height:140px"><div class="abs" style="left:0;top:0px;width:453px;height:130px"><svg class="abs" style="left:0;top:0" width="160" height="40" viewBox="0 0 160 40"><path d="M4.600 13.800C40 12.800 100 13 151.600 13.400L152 30.800C120 32 60 32.300 30 31.900C15 32.100 6 31.900 4.200 31.300Z" fill="#f5f51c"/></svg><div class="h">Überbuchung erlauben - für Nutzung der Warteliste aktivieren!</div><div class="p">[plugin.tx_drkcourseregistration.settings.overbookingAllowed]</div><svg class="abs" style="left:30px;top:58px" width="50" height="50" viewBox="0 0 50 50"><path d="M6.400 4.800C18 3.800 32 4 42.600 4.600L42.800 41C36 42.400 24 42 16 41.400C10 40.600 6 38 3.800 34.500L3.600 8Z" fill="#f5f51c"/></svg><div class="ig" style="top:66px"><div class="b"></div><svg class="abs" style="left:8px;top:8.4px" width="12" height="12" viewBox="0 0 12 12" ><path d="M2.600 3.600A4.600 4.600 0 1 1 2 8.200" fill="none" stroke="#111" stroke-width="1.300"/><path d="M.6 1.200V5.200H4.600Z" fill="#111"/></svg><div class="b" style="left:27px;width:30.400px;background:transparent;border-color:#c4c430;border-radius:0 2px 2px 0"></div><div class="abs" style="left:36.400px;top:9px;width:10.400px;height:10.200px;border:1.300px solid #3c3c14;border-radius:1.600px"></div></div></div></div>
<div class="sec" style="left:-1px;top:409.5px;height:140px"><div class="abs" style="left:0;top:-1.1px;width:453px;height:130px"><div class="h">Text Überbuchung nicht erlaubt</div><div class="p">[plugin.tx_drkcourseregistration.settings.overbookingForbiddenMessage]</div><div class="d">Überbuchung verboten Meldung: Keine freien Plätze.</div><div class="ig" style="top:92px"><div class="b"></div><svg class="abs" style="left:7.3px;top:7.6px" width="13.4" height="13.4" viewBox="0 0 13.400 13.400" ><g transform="translate(6.700 6.700) rotate(-45)"><path d="M-8.600 0L-5 -2.200H3.600V2.200H-5Z" fill="#0d0d0d"/><path d="M4.700 -2.200H6.600Q7.800 -2.200 7.800 -1V1Q7.800 2.200 6.600 2.200H4.700Z" fill="#0d0d0d"/><circle cx="-6.500" cy="0" r=".700" fill="#f4f4f4"/><path d="M-3.800 -.700H2.600" stroke="#8a8a8a" stroke-width=".500"/></g></svg><div class="i">Es tut uns Leid, es sind keine freien Plätze mehr verfügbar.</div></div></div></div>
<div class="sec" style="left:-1px;top:546.8px;height:140px"><div class="abs" style="left:0;top:0.2px;width:453px;height:130px"><div class="h">Text Teilnehmner kommt auf Warteliste</div><div class="p">[plugin.tx_drkcourseregistration.settings.waitinglistMessage]</div><div class="ig" style="top:66px"><div class="b"></div><svg class="abs" style="left:7.3px;top:7.6px" width="13.4" height="13.4" viewBox="0 0 13.400 13.400" ><g transform="translate(6.700 6.700) rotate(-45)"><path d="M-8.600 0L-5 -2.200H3.600V2.200H-5Z" fill="#0d0d0d"/><path d="M4.700 -2.200H6.600Q7.800 -2.200 7.800 -1V1Q7.800 2.200 6.600 2.200H4.700Z" fill="#0d0d0d"/><circle cx="-6.500" cy="0" r=".700" fill="#f4f4f4"/><path d="M-3.800 -.700H2.600" stroke="#8a8a8a" stroke-width=".500"/></g></svg><div class="i">Achtung, dieser Kurs ist leider ausgebucht. Wir übernehmen Ihre Anmeld</div></div></div></div>
<div class="sec" style="left:-1px;top:659.8px;height:140px"><div class="abs" style="left:0;top:-1.0px;width:453px;height:130px"><div class="h">Text Kurs überbucht</div><div class="p">[plugin.tx_drkcourseregistration.settings.overbookingMessage]</div><div class="d">Überbuchung Meldung - Kurs wurde überbucht.</div><div class="ig" style="top:92px"><div class="b"></div><svg class="abs" style="left:7.3px;top:7.6px" width="13.4" height="13.4" viewBox="0 0 13.400 13.400" ><g transform="translate(6.700 6.700) rotate(-45)"><path d="M-8.600 0L-5 -2.200H3.600V2.200H-5Z" fill="#0d0d0d"/><path d="M4.700 -2.200H6.600Q7.800 -2.200 7.800 -1V1Q7.800 2.200 6.600 2.200H4.700Z" fill="#0d0d0d"/><circle cx="-6.500" cy="0" r=".700" fill="#f4f4f4"/><path d="M-3.800 -.700H2.600" stroke="#8a8a8a" stroke-width=".500"/></g></svg><div class="i"></div></div></div></div>
</div>
<div class="abs" style="left:0;top:0;width:476px;height:32.800px;background:#eeeeee;border-bottom:1.300px solid #c2c2c2"></div>
<div class="btn" style="left:23px;top:4.700px;width:76.600px;height:23px"><span class="abs" style="left:21.200px;top:0;line-height:22.600px;font-size:10.100px;color:#222">Speichern</span></div><svg class="abs" style="left:27.6px;top:9.9px" width="12.5" height="12.5" viewBox="0 0 12.500 12.500" ><path d="M.7.700H9.600L11.800 2.900V11.800H.7Z" fill="none" stroke="#111" stroke-width="1.300"/><rect x="3" y=".700" width="5.600" height="3.600" fill="none" stroke="#111" stroke-width="1.100"/><rect x="6.300" y="1.200" width="1.400" height="2.400" fill="#111"/><rect x="2.600" y="7.200" width="7.300" height="4.600" fill="none" stroke="#111" stroke-width="1.100"/></svg>
<div class="btn" style="left:105.200px;top:4.700px;width:23.600px;height:23px"></div><svg class="abs" style="left:111.2px;top:9.5px" width="13.5" height="13.5" viewBox="0 0 13.500 13.500" ><path d="M2.800 12.200H.8V.700H7L10 3.700V5.800" fill="none" stroke="#111" stroke-width="1.500"/><path d="M7 .900V3.700H9.800" fill="none" stroke="#111" stroke-width="1.100"/><path d="M4 10C5.400 7.700 7.100 6.800 8.800 6.800S12.200 7.700 13.600 10C12.200 12.300 10.500 13.200 8.800 13.200S5.400 12.300 4 10Z" fill="#f4f4f4" stroke="#111" stroke-width="1.200"/><circle cx="8.800" cy="10" r="2.300" fill="#111"/><circle cx="8.200" cy="9.300" r=".600" fill="#999"/></svg>
</div>
<div id="topbar"></div>
</body></html>
